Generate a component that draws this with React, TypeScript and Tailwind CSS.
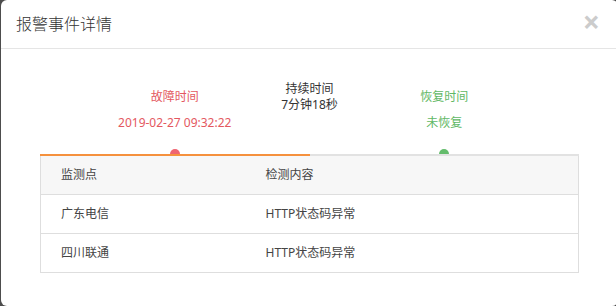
const font = {
  fontFamily: '"Noto Sans", "Noto Sans CJK SC", sans-serif',
};

const rows = [
  { point: "广东电信", content: "HTTP状态码异常" },
  { point: "四川联通", content: "HTTP状态码异常" },
];

export default function App() {
  return (
    <div className="h-[306px] w-[616px] overflow-hidden bg-[#4d4d4d]" style={font}>
      <div className="ml-[1px] h-[306px] w-[617px] rounded-[6px] bg-white">
        {/* header */}
        <div className="flex h-[49px] items-center justify-between border-b border-[#e5e5e5] pl-[15px] pr-[16px]">
          <h2 className="text-[16px] font-light text-[#333]">报警事件详情</h2>
          <span className="mb-[4px] mr-[2px] text-[30px] font-bold leading-none text-[#cccccc]">×</span>
        </div>

        <div className="px-[39px]">
          {/* timeline */}
          <div className="relative mt-[32px] flex h-[73px] text-[12px]">
            <div className="flex w-1/2 flex-col items-center text-[#e4585f]">
              <span className="mt-[8px] leading-[16px]">故障时间</span>
              <span className="mt-[10px] leading-[16px]">2019-02-27 09:32:22</span>
            </div>
            <div className="flex w-1/2 flex-col items-center text-[#5fb865]">
              <span className="mt-[8px] leading-[16px]">恢复时间</span>
              <span className="mt-[10px] leading-[16px]">未恢复</span>
            </div>
            <div className="absolute left-1/2 top-0 flex -translate-x-1/2 flex-col items-center leading-[16px] text-[#333]">
              <span>持续时间</span>
              <span>7分钟18秒</span>
            </div>
            <div className="absolute bottom-0 left-[25%] h-[5px] w-[10px] -translate-x-1/2 rounded-t-full bg-[#ef6470]" />
            <div className="absolute bottom-0 left-[75%] h-[5px] w-[10px] -translate-x-1/2 rounded-t-full bg-[#64bc6c]" />
          </div>
          <div className="flex h-[2px]">
            <div className="w-1/2 bg-[#f5913d]" />
            <div className="w-1/2 bg-[#e2e2e2]" />
          </div>

          {/* table */}
          <table className="w-full border-collapse text-[12px] text-[#444]">
            <thead>
              <tr className="h-[38px] bg-[#f7f7f7]">
                <th className="w-[205px] border border-r-0 border-t-0 border-[#dedede] pl-[20px] text-left font-normal">监测点</th>
                <th className="border border-l-0 border-t-0 border-[#dedede] pl-[20px] text-left font-normal">检测内容</th>
              </tr>
            </thead>
            <tbody>
              {rows.map((r) => (
                <tr key={r.point} className="h-[39px]">
                  <td className="border border-r-0 border-[#dedede] pl-[20px]">{r.point}</td>
                  <td className="border border-l-0 border-[#dedede] pl-[20px]">{r.content}</td>
                </tr>
              ))}
            </tbody>
          </table>
        </div>
      </div>
    </div>
  );
}
